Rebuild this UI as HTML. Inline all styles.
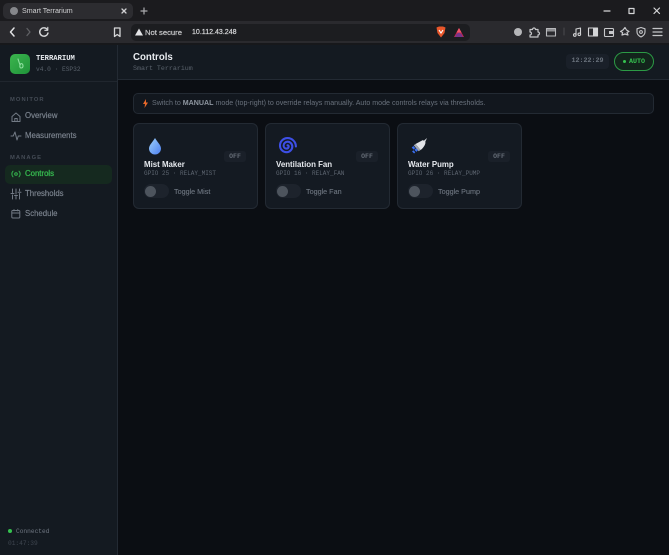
<!DOCTYPE html>
<html><head><meta charset="utf-8"><style>
*{box-sizing:border-box;margin:0;padding:0}
html,body{width:669px;height:555px;overflow:hidden;background:#0b0e13;font-family:"Liberation Sans",sans-serif}
#w{position:absolute;left:0;top:0;width:669px;height:555px;overflow:hidden;filter:blur(.35px)}
.a{position:absolute;white-space:nowrap}
.m{font-family:"Liberation Mono",monospace}
svg{position:absolute;overflow:visible}
.nav{left:25px;font-size:7.8px;color:#7d8590;line-height:12px;-webkit-text-stroke:.15px #7d8590}
.lab{left:10px;font-size:5.8px;letter-spacing:1.05px;color:#454c56;line-height:8px;font-weight:bold}
.card{position:absolute;top:123px;width:125px;height:86px;background:#141a22;border:1px solid #232a33;border-radius:6px}
.ct{position:absolute;left:10px;top:34.500px;font-size:7.900px;font-weight:bold;color:#e6e9ee;line-height:12px;white-space:nowrap}
.cs{position:absolute;left:10px;top:45.500px;font-size:6px;color:#5d6570;line-height:8px;white-space:nowrap;font-family:"Liberation Mono",monospace}
.off{position:absolute;left:90px;top:27px;width:22px;height:11px;background:#1a2029;border-radius:3px;font:bold 6.5px/11px "Liberation Mono",monospace;color:#666e78;text-align:center}
.tg{position:absolute;left:10px;top:60px;width:25px;height:14px;background:#1d232c;border-radius:7px}
.tg i{position:absolute;left:1px;top:1.5px;width:11px;height:11px;border-radius:50%;background:#4d545d}
.tl{position:absolute;left:40px;top:60.500px;font-size:7.2px;color:#6f7782;line-height:13px;white-space:nowrap;-webkit-text-stroke:.1px #6f7782}
</style></head><body><div id="w">

<!-- browser chrome -->
<div class="a" style="left:0;top:0;width:669px;height:21px;background:#1b1b1e"></div>
<div class="a" style="left:3px;top:3px;width:130px;height:16px;background:#2c2c30;border-radius:5px"></div>
<div class="a" style="left:0;top:21px;width:669px;height:23px;background:#2a2a2e"></div>
<div class="a" style="left:0;top:43px;width:669px;height:2px;background:#17181b"></div>
<div class="a" style="left:10px;top:7px;width:8px;height:8px;border-radius:50%;background:#85878b"></div>
<div class="a" style="left:22px;top:5.500px;font-size:7.100px;line-height:11px;color:#d0d1d3">Smart Terrarium</div>
<svg style="left:0;top:0" width="669" height="45" fill="none" stroke-linecap="round" stroke-linejoin="round">
<path d="M122 9l4 4M126 9l-4 4" stroke="#d0d1d3" stroke-width="1.300"/>
<path d="M144 8v6M141 11h6" stroke="#a9aaad" stroke-width="1.200"/>
<path d="M604 11h6" stroke="#d5d6d8" stroke-width="1.200"/>
<rect x="629" y="8.500" width="5" height="5" stroke="#d5d6d8" stroke-width="1.200"/>
<path d="M654 8l5.500 5.500M659.500 8l-5.500 5.500" stroke="#d5d6d8" stroke-width="1.200"/>
<path d="M14 28l-3.500 4 3.500 4" stroke="#e0e1e3" stroke-width="1.500"/>
<path d="M27 28.500l3 3.500-3 3.500" stroke="#5f6064" stroke-width="1.300"/>
<path d="M47.300 29.500a4.200 4.200 0 1 0 .7 3.500" stroke="#d8d9db" stroke-width="1.400"/><path d="M47.800 27.300v3h-3" stroke="#d8d9db" stroke-width="1.100"/>
<path d="M114.500 28h5.500v8.500l-2.750-2-2.750 2z" stroke="#d5d6d8" stroke-width="1.300"/>
<path d="M422.500 28.500h-3.500v7h7.500v-3M422.500 32.500l4.500-4.500M424.500 28h2.500v2.500" stroke="#a7a8ab" stroke-width="1"/>
<path d="M431 28v8" stroke="#66676b" stroke-width=".9"/>
<path d="M518 32h0" stroke="#b5b6b9" stroke-width="8"/>
<path d="M530 29.500h2.500a1.500 1.500 0 0 1 3 0h2.500v2.500a1.500 1.500 0 0 1 0 3v2h-8v-2a1.500 1.500 0 0 0 0-3z" stroke="#c4c5c8" stroke-width="1.200"/>
<rect x="546.500" y="28.500" width="9" height="7.500" stroke="#b8b9bc" stroke-width="1.100"/><rect x="547" y="29" width="8" height="2.500" fill="#8f9093"/>
<path d="M564 28v7" stroke="#4d4e52" stroke-width=".9"/>
<path d="M576 35v-6l4.500-1v6" stroke="#d0d1d3" stroke-width="1.100"/><circle cx="574.800" cy="35" r="1.300" stroke="#d0d1d3" stroke-width="1.100"/><circle cx="579.300" cy="34.300" r="1.300" stroke="#d0d1d3" stroke-width="1.100"/>
<rect x="588.500" y="28" width="9" height="8" stroke="#d5d6d8" stroke-width="1.100"/><rect x="593" y="28" width="4.500" height="8" fill="#d5d6d8"/>
<rect x="604.500" y="28.500" width="9" height="8" rx="1" stroke="#c8c9cc" stroke-width="1.100"/><rect x="609" y="31" width="4.500" height="3" fill="#c8c9cc"/>
<path d="M625 27.500l1.500 2.500 2.500 1.500-2 1 1 2.500-3-1-3 1 .6-2.500-2.100-1 2.500-1.500z" stroke="#c8c9cc" stroke-width="1.200"/>
<path d="M641 27.500l4 1.300v3.200c0 2.500-2 4-4 5-2-1-4-2.500-4-5v-3.200z" stroke="#c8c9cc" stroke-width="1.100"/><circle cx="641" cy="32" r="1.400" stroke="#c8c9cc" stroke-width="1"/>
<path d="M653 28.500h9M653 32h9M653 35.500h9" stroke="#c4c5c8" stroke-width="1.200"/>
</svg>
<div class="a" style="left:131px;top:24px;width:339px;height:17px;background:#1c1d20;border-radius:5px"></div>
<svg style="left:135px;top:28px" width="9" height="8"><path d="M4 .5L8 7.500H0z" fill="#e2e3e5"/></svg>
<div class="a" style="left:145px;top:26px;font-size:7.650px;line-height:13px;color:#c8c9cb;-webkit-text-stroke:.2px #c8c9cb">Not secure</div>
<div class="a" style="left:192px;top:26px;font-size:7.050px;line-height:13px;color:#d8d9db;-webkit-text-stroke:.2px #d8d9db">10.112.43.248</div>
<svg style="left:436px;top:26px" width="10" height="12"><path d="M.5 1.500L3 .5h4l2.500 1-1 5.500L5 11.500 1.500 7z" fill="#e8562a"/><path d="M3 4l2 3 2-3" stroke="#fff" stroke-width="1.100" fill="none"/></svg>
<svg style="left:454px;top:28px" width="10" height="9"><path d="M5 0l5 9H0z" fill="#c9274a"/><path d="M5 0l2.500 4.500H2.500z" fill="#f0566a"/><path d="M2.500 6l2.500-1.500L7.500 6l1.500 3H1z" fill="#5b3aa0" opacity=".75"/></svg>

<!-- sidebar -->
<div class="a" style="left:0;top:45px;width:118px;height:510px;background:#141a21;border-right:1px solid #232a33"></div>
<div class="a" style="left:0;top:81px;width:117px;height:1px;background:#20262e"></div>
<div class="a" style="left:10px;top:54px;width:20px;height:20px;border-radius:5px;background:linear-gradient(135deg,#3cb54f,#1f9339)"></div>
<svg style="left:10px;top:54px" width="20" height="20" fill="none"><path d="M8 5l2 6M11 9.500c1.500 0 2 1 2 2.500 0 1.500-1 2-2 2s-1.500-1.500-1-3z" stroke="#8fe0a0" stroke-width="1.100" stroke-linecap="round"/></svg>
<div class="a m" style="left:36px;top:53.500px;font-size:7.200px;font-weight:bold;line-height:11px;color:#e8ebef">TERRARIUM</div>
<div class="a m" style="left:36px;top:66px;font-size:6.200px;line-height:8px;color:#59616b">v4.0 · ESP32</div>

<div class="a lab" style="top:96px">MONITOR</div>
<svg style="left:11px;top:112px" width="10" height="10" fill="none" stroke="#727a85" stroke-width="1" stroke-linejoin="round"><path d="M1 4.500L5 1l4 3.500V9.500H1z"/><path d="M3.800 9.500V6.500h2.400v3"/></svg>
<div class="a nav" style="top:110px">Overview</div>
<svg style="left:11px;top:131px" width="10" height="10" fill="none" stroke="#727a85" stroke-width="1" stroke-linejoin="round" stroke-linecap="round"><path d="M0 5h2.200L4 1l2 8 1.300-4H10"/></svg>
<div class="a nav" style="top:130px">Measurements</div>
<div class="a lab" style="top:154px">MANAGE</div>
<div class="a" style="left:5px;top:165px;width:107px;height:19px;background:#15291f;border-radius:5px"></div>
<svg style="left:11px;top:169px" width="10" height="10" fill="none" stroke="#35b54e" stroke-width="1" stroke-linecap="round"><circle cx="5" cy="5" r="1.300"/><path d="M2 2.200a4 4 0 0 0 0 5.600M8 2.200a4 4 0 0 1 0 5.600"/></svg>
<div class="a nav" style="top:168px;color:#35b54e;-webkit-text-stroke:.3px #35b54e">Controls</div>
<svg style="left:11px;top:189px" width="10" height="10" fill="none" stroke="#727a85" stroke-width="1" stroke-linecap="round"><path d="M1.500 0v3.500M1.500 6v4M5 0v5M5 7.500V10M8.500 0v2M8.500 4.500V10M0 4.500h3M3.500 6.500h3M7 3.300h3"/></svg>
<div class="a nav" style="top:188px">Thresholds</div>
<svg style="left:11px;top:209px" width="10" height="10" fill="none" stroke="#727a85" stroke-width="1"><rect x=".8" y="1.500" width="8" height="7.500" rx="1"/><path d="M.8 4h8M3 .3v2M6.700 .3v2"/></svg>
<div class="a nav" style="top:208px">Schedule</div>

<div class="a" style="left:8px;top:529px;width:4px;height:4px;border-radius:50%;background:#35c24f"></div>
<div class="a m" style="left:16px;top:527px;font-size:6.200px;line-height:9px;color:#6f7782">Connected</div>
<div class="a m" style="left:8px;top:539px;font-size:6.200px;line-height:9px;color:#3f4650">01:47:39</div>

<!-- header -->
<div class="a" style="left:118px;top:45px;width:551px;height:35px;background:#141a21;border-bottom:1px solid #232a33"></div>
<div class="a" style="left:133px;top:50.500px;font-size:9.700px;font-weight:bold;line-height:13px;color:#e8ebef">Controls</div>
<div class="a m" style="left:133px;top:63.500px;font-size:6.650px;line-height:9px;color:#59616b">Smart Terrarium</div>
<div class="a m" style="left:566px;top:54px;width:43px;height:15px;background:#1a2029;border-radius:4px;font-size:6.700px;line-height:15px;text-align:center;color:#6a727c;font-weight:bold">12:22:29</div>
<div class="a" style="left:614px;top:52px;width:40px;height:19px;border:1px solid #2c9a45;border-radius:10px;background:#13241c"></div>
<div class="a" style="left:623px;top:60px;width:3px;height:3px;border-radius:50%;background:#35c24f"></div>
<div class="a m" style="left:629px;top:57px;font-size:6.700px;font-weight:bold;line-height:10px;color:#35c24f">AUTO</div>

<!-- notice -->
<div class="a" style="left:133px;top:93px;width:521px;height:21px;background:#12171e;border:1px solid #232a33;border-radius:5px"></div>
<svg style="left:143px;top:99px" width="5" height="9"><path d="M3 0L0 5h2L1.500 9 5 3.500H3z" fill="#e8682a"/></svg>
<div class="a" style="left:152px;top:98px;font-size:7.100px;line-height:11px;color:#69717c">Switch to <b style="color:#8f97a1">MANUAL</b> mode (top-right) to override relays manually. Auto mode controls relays via thresholds.</div>

<!-- cards -->
<div class="card" style="left:133px">
 <svg style="left:14px;top:13px" width="14" height="18"><defs><linearGradient id="d" x1="0" y1="0" x2="1" y2="1"><stop offset="0" stop-color="#9fd2fb"/><stop offset="1" stop-color="#4d80f0"/></linearGradient></defs><path d="M7 1C5.500 4 1 8 1 11.500a6 6 0 0 0 12 0C13 8 8.500 4 7 1z" fill="url(#d)"/></svg>
 <div class="ct">Mist Maker</div><div class="cs">GPIO 25 · RELAY_MIST</div><div class="off">OFF</div>
 <div class="tg"><i></i></div><div class="tl">Toggle Mist</div>
</div>
<div class="card" style="left:265px">
 <svg style="left:13px;top:14px" width="17" height="17" fill="none"><path d="M8.500 7.300a1.200 1.200 0 0 1 1.200 1.200a2.100 2.100 0 0 1-2.100 2.100a3 3 0 0 1-3-3a3.900 3.900 0 0 1 3.900-3.900a4.800 4.800 0 0 1 4.800 4.800a5.700 5.700 0 0 1-5.700 5.700a6.600 6.600 0 0 1-6.600-6.600a7.500 7.500 0 0 1 7.500-7.500a8.400 8.400 0 0 1 8.400 8.400" stroke="#3d4fe6" stroke-width="2.100" stroke-linecap="round"/></svg>
 <div class="ct">Ventilation Fan</div><div class="cs">GPIO 16 · RELAY_FAN</div><div class="off">OFF</div>
 <div class="tg"><i></i></div><div class="tl">Toggle Fan</div>
</div>
<div class="card" style="left:397px">
 <svg style="left:14px;top:14px" width="16" height="17"><path d="M15 0l-3.500 3 1.500 1.500z" fill="#d8dadf"/><path d="M11 2L3.500 6l5 6c2-1.200 4.700-4.500 5-7.500z" fill="#e2e4e8"/><path d="M3.500 6l5 6-1.800 1.300-5-6z" fill="#a3a8b2"/><path d="M1.300 8l2 2-1.600 1.600-2-2zM4 10.300l2 2-1.600 1.600-2-2zM1.300 12.300l2 2-1.200 1.200-2-2z" fill="#3a6ff0"/></svg>
 <div class="ct">Water Pump</div><div class="cs">GPIO 26 · RELAY_PUMP</div><div class="off">OFF</div>
 <div class="tg"><i></i></div><div class="tl">Toggle Pump</div>
</div>
</div></body></html>
